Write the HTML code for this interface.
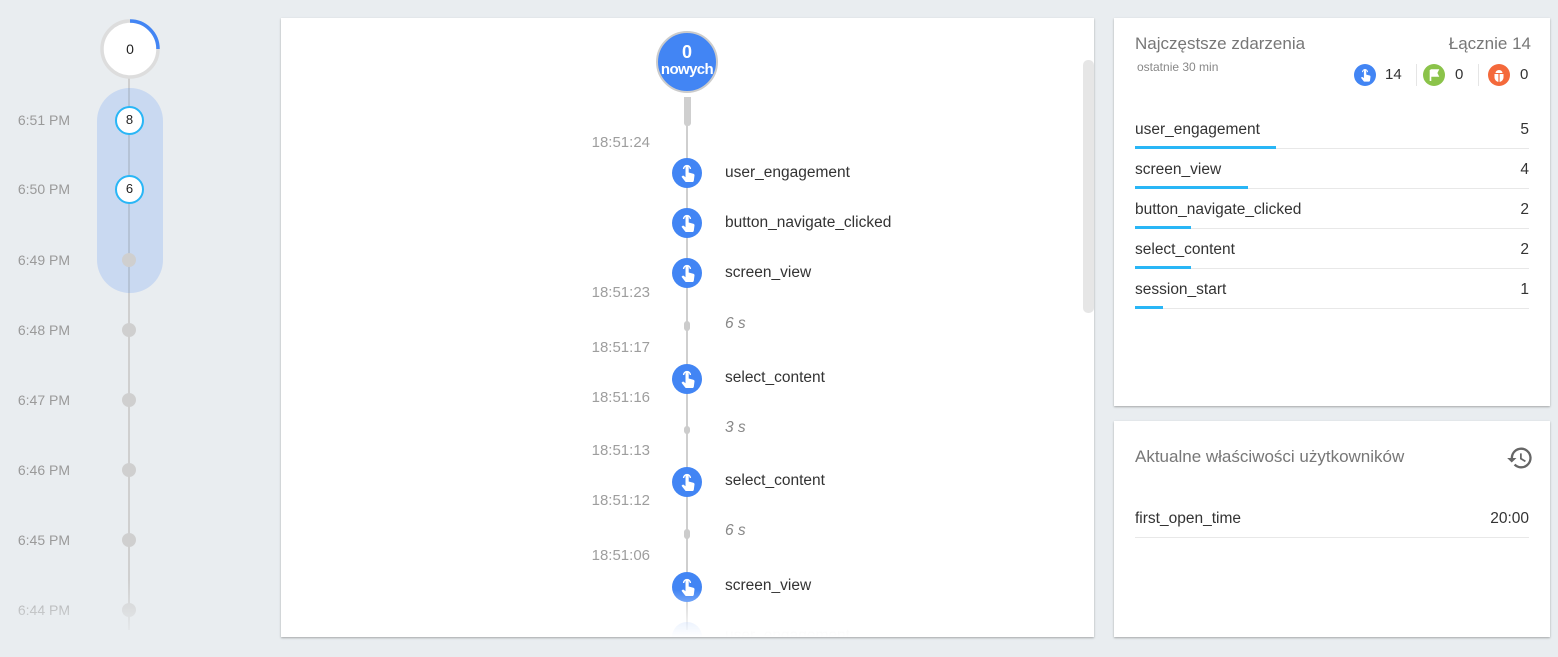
<!DOCTYPE html>
<html><head><meta charset="utf-8"><style>
*{margin:0;padding:0;box-sizing:border-box}
body{width:1558px;height:657px;background:#e9edf0;font-family:"Liberation Sans",Roboto,sans-serif;position:relative;overflow:hidden}
.a{position:absolute}
.lbl{position:absolute;left:0;width:70px;text-align:right;font-size:14px;color:#9a9a9a;line-height:16px}
.dot{position:absolute;left:122px;width:14px;height:14px;border-radius:50%;background:#cfcfcf}
.num{position:absolute;left:115px;width:29px;height:29px;border-radius:50%;background:#fff;border:2.5px solid #29b6f6;font-size:13px;text-align:center;line-height:24px;color:#222}
.card{position:absolute;background:#fff;box-shadow:0 1px 2px rgba(0,0,0,.3)}
.t{position:absolute;width:100px;left:550px;text-align:right;font-size:15px;color:#9e9e9e}
.ev{position:absolute;left:725px;font-size:15.5px;color:#333}
.ic{position:absolute;left:672px;width:30px;height:30px;border-radius:50%;background:#4285f4}
.gap{position:absolute;left:725px;font-size:15.5px;color:#888;font-style:italic}
.gd{position:absolute;left:684px;width:6px;height:10px;border-radius:3px;background:#ccc}
.row{position:absolute;left:1135px;width:394px;height:29px;border-bottom:1px solid #e8e8e8;font-size:15.5px;color:#333}
.row span{position:absolute;top:1px}
.row b{position:absolute;right:0;top:1px;font-weight:normal}
.row i{position:absolute;left:0;bottom:-1px;height:3px;background:#29b6f6}
</style></head><body>
<!-- left timeline -->
<div class="a" style="left:128px;top:70px;width:2px;height:560px;background:#cfcfcf"></div>
<div class="a" style="left:97px;top:88px;width:66px;height:205px;border-radius:33px;background:#c9d9f1"></div>
<div class="a" style="left:128px;top:88px;width:2px;height:205px;background:#b5c3d6"></div>
<svg class="a" style="left:99px;top:18px" width="62" height="62"><circle cx="31" cy="31" r="28" fill="#fff" stroke="#ddd" stroke-width="3.5"/><path d="M31 3 A28 28 0 0 1 59 31" fill="none" stroke="#4285f4" stroke-width="3.5"/><text x="31" y="36" font-size="14" text-anchor="middle" fill="#222" font-family="Liberation Sans">0</text></svg>
<div class="num" style="top:106px">8</div>
<div class="num" style="top:175px">6</div>
<div class="lbl" style="top:112px">6:51 PM</div>
<div class="lbl" style="top:181px">6:50 PM</div>
<div class="lbl" style="top:252px">6:49 PM</div><div class="dot" style="top:253px"></div>
<div class="lbl" style="top:322px">6:48 PM</div><div class="dot" style="top:323px"></div>
<div class="lbl" style="top:392px">6:47 PM</div><div class="dot" style="top:393px"></div>
<div class="lbl" style="top:462px">6:46 PM</div><div class="dot" style="top:463px"></div>
<div class="lbl" style="top:532px">6:45 PM</div><div class="dot" style="top:533px"></div>
<div class="lbl" style="top:602px">6:44 PM</div><div class="dot" style="top:603px"></div>
<div class="a" style="left:0;top:580px;width:270px;height:77px;background:linear-gradient(rgba(233,237,240,0),#e9edf0 80%)"></div>
<!-- center card -->
<div class="card" style="left:281px;top:18px;width:813px;height:619px"></div>
<div class="a" style="left:686px;top:100px;width:2px;height:530px;background:#cfcfcf"></div>
<div class="a" style="left:684px;top:97px;width:7px;height:29px;border-radius:0 0 3px 3px;background:#cfcfcf"></div>
<div class="a" style="left:656px;top:31px;width:62px;height:62px;border-radius:50%;background:#4285f4;border:2px solid #ccc;color:#fff;text-align:center">
<div style="font-size:18px;font-weight:bold;margin-top:10px;line-height:18px">0</div><div style="font-size:15px;font-weight:bold;line-height:17px;letter-spacing:-.6px;margin-left:-4px;margin-right:-4px">nowych</div></div>
<div class="a" style="left:1083px;top:60px;width:11px;height:253px;border-radius:5px;background:#e6e6e6"></div>
<svg width="0" height="0" style="position:absolute"><defs><symbol id="h" viewBox="0 0 30 30"><path d="M13.5 9.5a1.6 1.6 0 0 1 3.2 0v5l4.6 1.2c.8.2 1.3.9 1.2 1.7l-.7 5.3c-.1.7-.7 1.3-1.4 1.3h-6.2c-.4 0-.8-.2-1-.5l-3.7-4.7 1-.9c.4-.3.9-.3 1.3 0l1.7 1.3z" fill="#fff"/><path d="M11.6 11a3.4 3.4 0 1 1 6.8 0" fill="none" stroke="#fff" stroke-width="1.4"/></symbol></defs></svg>
<div class="t" style="top:134px">18:51:24</div>
<div class="ic" style="top:158px"><svg width="30" height="30"><use href="#h"/></svg></div><div class="ev" style="top:164px">user_engagement</div>
<div class="ic" style="top:208px"><svg width="30" height="30"><use href="#h"/></svg></div><div class="ev" style="top:214px">button_navigate_clicked</div>
<div class="ic" style="top:258px"><svg width="30" height="30"><use href="#h"/></svg></div><div class="ev" style="top:264px">screen_view</div>
<div class="t" style="top:284px">18:51:23</div>
<div class="gd" style="top:321px"></div><div class="gap" style="top:315px">6 s</div>
<div class="t" style="top:339px">18:51:17</div>
<div class="ic" style="top:364px"><svg width="30" height="30"><use href="#h"/></svg></div><div class="ev" style="top:369px">select_content</div>
<div class="t" style="top:389px">18:51:16</div>
<div class="gd" style="top:426px;height:8px"></div><div class="gap" style="top:419px">3 s</div>
<div class="t" style="top:442px">18:51:13</div>
<div class="ic" style="top:467px"><svg width="30" height="30"><use href="#h"/></svg></div><div class="ev" style="top:472px">select_content</div>
<div class="t" style="top:492px">18:51:12</div>
<div class="gd" style="top:529px"></div><div class="gap" style="top:522px">6 s</div>
<div class="t" style="top:547px">18:51:06</div>
<div class="ic" style="top:572px"><svg width="30" height="30"><use href="#h"/></svg></div><div class="ev" style="top:577px">screen_view</div>
<div class="a" style="left:672px;top:622px;width:30px;height:15px;border-radius:15px 15px 0 0;background:#4285f4;opacity:.3"></div>
<div class="ev" style="top:627px;height:10px;overflow:hidden;opacity:.15">user_engagement</div>
<div class="a" style="left:600px;top:590px;width:300px;height:47px;background:linear-gradient(rgba(255,255,255,0),#fff)"></div>
<!-- right card 1 -->
<div class="card" style="left:1114px;top:18px;width:436px;height:388px"></div>
<div class="a" style="left:1135px;top:34px;font-size:17px;color:#777">Najczęstsze zdarzenia</div>
<div class="a" style="left:1137px;top:60px;font-size:12px;color:#888">ostatnie 30 min</div>
<div class="a" style="right:27px;top:34px;font-size:17px;color:#777">Łącznie 14</div>
<div class="a" style="left:1354px;top:64px;width:22px;height:22px;border-radius:50%;background:#4285f4"><svg width="22" height="22" viewBox="0 0 30 30"><use href="#h"/></svg></div>
<div class="a" style="left:1385px;top:66px;font-size:15px;color:#333">14</div>
<div class="a" style="left:1416px;top:64px;width:1px;height:22px;background:#e5e5e5"></div>
<div class="a" style="left:1423px;top:64px;width:22px;height:22px;border-radius:50%;background:#8bc34a"><svg width="22" height="22"><path d="M7.5 6v11M7.5 6h7.5l-1.5 3 1.5 3h-7.5" fill="#fff" stroke="#fff" stroke-width="1.6"/></svg></div>
<div class="a" style="left:1455px;top:66px;font-size:15px;color:#333">0</div>
<div class="a" style="left:1478px;top:64px;width:1px;height:22px;background:#e5e5e5"></div>
<div class="a" style="left:1488px;top:64px;width:22px;height:22px;border-radius:50%;background:#f4693b"><svg width="22" height="22"><path d="M6.5 10h9v3.5a4.5 4.5 0 0 1-9 0zM7.5 9a3.5 3 0 0 1 7 0z" fill="#fff"/><path d="M11 10v8" stroke="#f4693b" stroke-width="1.2"/></svg></div>
<div class="a" style="left:1520px;top:66px;font-size:15px;color:#333">0</div>
<div class="row" style="top:120px"><span>user_engagement</span><b>5</b><i style="width:141px"></i></div>
<div class="row" style="top:160px"><span>screen_view</span><b>4</b><i style="width:113px"></i></div>
<div class="row" style="top:200px"><span>button_navigate_clicked</span><b>2</b><i style="width:56px"></i></div>
<div class="row" style="top:240px"><span>select_content</span><b>2</b><i style="width:56px"></i></div>
<div class="row" style="top:280px"><span>session_start</span><b>1</b><i style="width:28px"></i></div>
<!-- right card 2 -->
<div class="card" style="left:1114px;top:421px;width:436px;height:216px"></div>
<div class="a" style="left:1135px;top:447px;font-size:17px;color:#777">Aktualne właściwości użytkowników</div>
<svg class="a" style="left:1506px;top:444px" width="28" height="28" viewBox="0 0 24 24"><path d="M13 3a9 9 0 0 0-9 9H1l3.9 3.9L9 12H6a7 7 0 1 1 2.05 4.95l-1.42 1.42A9 9 0 1 0 13 3zm-1 5v5l4.25 2.52.77-1.28-3.52-2.09V8z" fill="#666"/></svg>
<div class="row" style="top:509px;height:29px"><span>first_open_time</span><b>20:00</b></div>
</body></html>
